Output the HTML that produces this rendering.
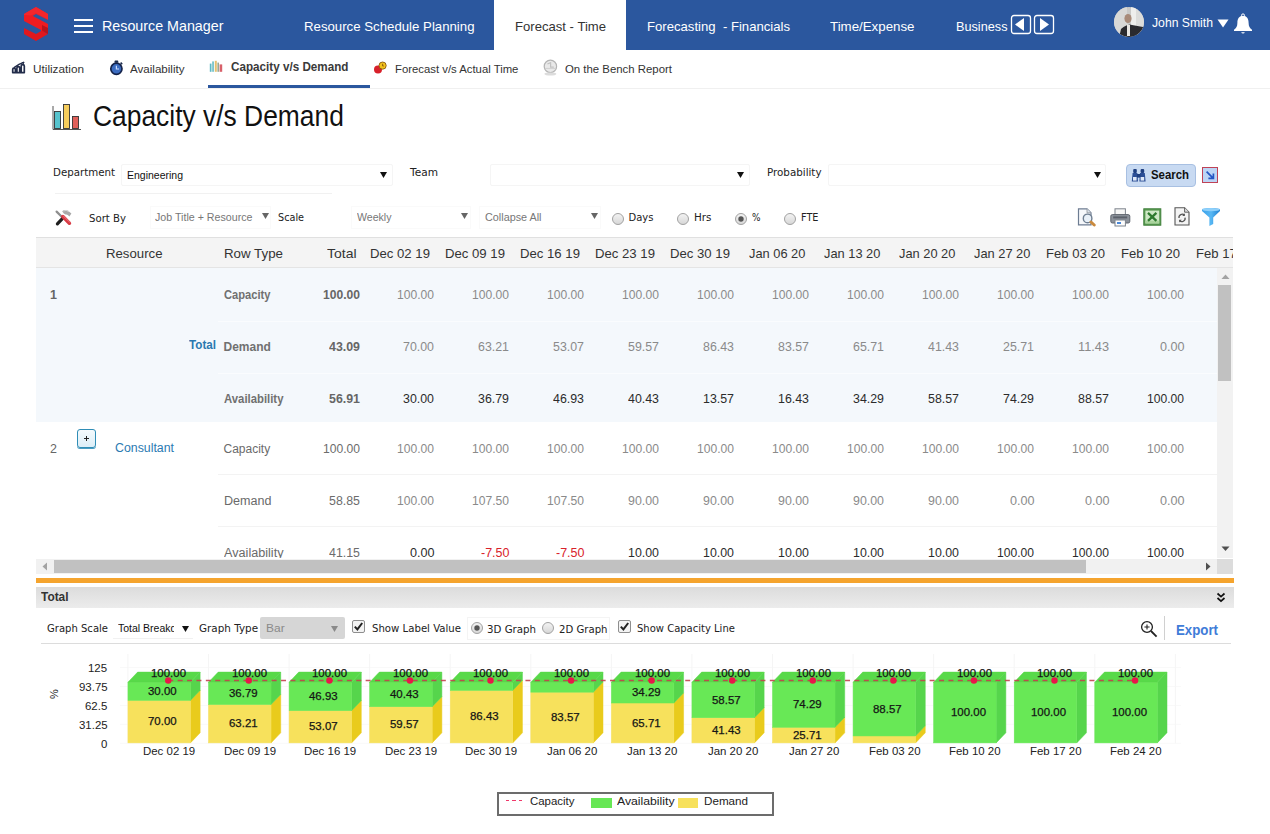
<!DOCTYPE html>
<html lang="en"><head><meta charset="utf-8"><title>Capacity v/s Demand</title>
<style>
html,body{margin:0;padding:0;background:#fff;}
header,nav,main,section{display:block;position:static;margin:0;padding:0;}
body{width:1270px;height:834px;position:relative;overflow:hidden;font-family:"Liberation Sans",Arial,sans-serif;}
.b{position:absolute;box-sizing:border-box;display:block;}
.t{position:absolute;white-space:nowrap;display:block;transform-origin:0 50%;}
</style></head>
<body>
<header>
<div class="b" style="left:0px;top:0px;width:1270px;height:49.5px;background:#2b579e;"></div>
<svg class="b" style="left:23px;top:6px;" width="26" height="36" viewBox="0 0 26 36">
<polygon points="13,1 25,8 25,14 13,8 7,11.5 1,8" fill="#e8222a"/>
<polygon points="1,8 7,11.5 7,17 1,14" fill="#b8141c"/>
<polygon points="1,9 1,15 18,24 18,27.5 25,23.5 25,18 8,9 " fill="#ee1c22"/>
<polygon points="13,35 1,28 1,22 13,28 19,24.5 25,28" fill="#e0181e"/>
<polygon points="25,28 19,24.5 19,19 25,22" fill="#b8141c"/>
<polygon points="13,1 25,8 25,13.5 13,7 8,9.5 1,9 1,8" fill="#f4262c"/>
</svg>
<div class="b" style="left:74px;top:19px;width:19px;height:2px;background:#fff;"></div>
<div class="b" style="left:74px;top:25px;width:19px;height:2px;background:#fff;"></div>
<div class="b" style="left:74px;top:31px;width:19px;height:2px;background:#fff;"></div>
<span class="t" style="left:101.5px;top:17.8px;font-size:15px;line-height:16.75px;color:#fff;transform:scaleX(0.952);">Resource Manager</span>
<span class="t" style="left:303.5px;top:20.1px;font-size:13px;line-height:14.52px;color:#fff;transform:scaleX(1.017);">Resource Schedule Planning</span>
<div class="b" style="left:494px;top:0px;width:132px;height:50px;background:#fff;"></div>
<span class="t" style="left:514.5px;top:20.1px;font-size:13px;line-height:14.52px;color:#333;transform:scaleX(1.008);">Forecast - Time</span>
<span class="t" style="left:646.5px;top:20.1px;font-size:13px;line-height:14.52px;color:#fff;transform:scaleX(1.010);white-space:pre;">Forecasting  - Financials</span>
<span class="t" style="left:830.0px;top:20.1px;font-size:13px;line-height:14.52px;color:#fff;transform:scaleX(1.023);">Time/Expense</span>
<span class="t" style="left:955.5px;top:20.1px;font-size:13px;line-height:14.52px;color:#fff;transform:scaleX(0.976);">Business</span>
<svg class="b" style="left:1010px;top:14px;" width="46" height="21" viewBox="0 0 46 21">
<rect x="1.5" y="1.5" width="19" height="18" rx="2.5" fill="none" stroke="#fff" stroke-width="1.3"/>
<polygon points="5,10.5 14,4 14,17" fill="#fff"/>
<rect x="24.5" y="1.5" width="19" height="18" rx="2.5" fill="none" stroke="#fff" stroke-width="1.3"/>
<polygon points="39,10.5 30,4 30,17" fill="#fff"/>
</svg>
<svg class="b" style="left:1113px;top:6px;" width="32" height="32" viewBox="0 0 32 32">
<defs><clipPath id="av"><circle cx="16" cy="16" r="15"/></clipPath></defs>
<g clip-path="url(#av)">
<rect width="32" height="32" fill="#c9c9c7"/>
<rect x="0" y="0" width="14" height="32" fill="#d8d8d6"/>
<rect x="18" y="0" width="5" height="20" fill="#eeeeec"/>
<rect x="23" y="0" width="9" height="32" fill="#dcdcda"/>
<ellipse cx="15" cy="12.5" rx="3.6" ry="4.6" fill="#a88a78"/>
<path d="M6 32 L8 23 Q15 17 19 19 L30 21 L31 32 Z" fill="#2a2a2e"/>
<path d="M14 18 L17 19 L17 30 L14 30 Z" fill="#e8e6e2"/>
</g></svg>
<span class="t" style="left:1152.0px;top:16.0px;font-size:13px;line-height:14.52px;color:#fff;transform:scaleX(0.938);">John Smith</span>
<svg class="b" style="left:1217px;top:19px;" width="12" height="9" viewBox="0 0 12 9"><polygon points="0.5,0.5 11.5,0.5 6,8.5" fill="#fff"/></svg>
<svg class="b" style="left:1233px;top:12.5px;" width="20" height="22" viewBox="0 0 20 22">
<circle cx="10" cy="2.4" r="1.5" fill="none" stroke="#fff" stroke-width="1"/>
<path d="M10 2.8 C13.8 2.8 15.6 6 15.6 9.8 C15.6 13.4 16.8 15.2 19 16.8 L19 18 L1 18 L1 16.8 C3.2 15.2 4.4 13.4 4.4 9.8 C4.4 6 6.2 2.8 10 2.8 Z" fill="#fff"/>
<path d="M8.2 19.2 a1.9 1.9 0 0 0 3.6 0 Z" fill="#fff"/>
</svg>
</header>
<nav>
<div class="b" style="left:0px;top:88px;width:1270px;height:1px;background:#f0f0f0;"></div>
<div class="b" style="left:208px;top:85px;width:162px;height:3px;background:#2b579e;"></div>
<svg class="b" style="left:10.5px;top:61px;" width="15.5" height="13" viewBox="0 0 15.5 13">
<path d="M1.7 11.6 L1.7 8.6 Q1.7 7.2 3 7.2 Q4.4 7.2 4.4 8.6 L4.4 11 L5.9 11 L5.9 7 Q5.9 5.6 7.3 5.6 Q8.7 5.6 8.7 7 L8.7 11 L10.2 11 L10.2 5 Q10.2 3.6 11.7 3.6 Q13.3 3.6 13.3 5 L13.3 11.6 Z" fill="#fff" stroke="#222c4a" stroke-width="1.7" stroke-linejoin="round"/>
<path d="M3.4 6.4 L8 3.4 L12.6 1.4" fill="none" stroke="#222c4a" stroke-width="1.5" stroke-linecap="round"/>
<path d="M10.6 0.9 L13.4 1 L12.6 3.4 Z" fill="#222c4a"/>
</svg>
<span class="t" style="left:32.5px;top:63.0px;font-size:11px;line-height:12.29px;color:#333;transform:scaleX(1.070);">Utilization</span>
<svg class="b" style="left:109px;top:60px;" width="15" height="16" viewBox="0 0 15 16">
<rect x="5.6" y="0.6" width="3.6" height="2.2" rx="0.6" fill="#1b2a4a"/>
<path d="M11.6 2.6 l1.6 1.6" stroke="#1b2a4a" stroke-width="1.6"/>
<circle cx="7.4" cy="8.8" r="5.6" fill="#3b6cc0" stroke="#14234a" stroke-width="1.7"/>
<path d="M7.4 5.8 L7.4 9 L10 9" fill="none" stroke="#c9dcff" stroke-width="1.2"/>
</svg>
<span class="t" style="left:130.0px;top:63.0px;font-size:11px;line-height:12.29px;color:#333;transform:scaleX(1.053);">Availability</span>
<svg class="b" style="left:208.5px;top:60px;" width="15" height="13" viewBox="0 0 15 13">
<rect x="0.8" y="3.6" width="1.7" height="8.2" fill="#5fb9c4"/>
<rect x="3.2" y="1.4" width="1.7" height="10.4" fill="#6fc0c8"/>
<rect x="5.8" y="0.8" width="2" height="11" fill="#e5c070"/>
<rect x="8.4" y="2.6" width="1.6" height="9.2" fill="#9aa890"/>
<rect x="10.6" y="4.4" width="2.6" height="7.4" fill="#d8606a"/>
</svg>
<span class="t" style="left:230.5px;top:61.1px;font-size:12.5px;line-height:13.96px;color:#3a3a3a;font-weight:700;transform:scaleX(0.934);">Capacity v/s Demand</span>
<svg class="b" style="left:373px;top:61px;" width="15" height="13" viewBox="0 0 15 13">
<circle cx="5" cy="8.4" r="4" fill="#d8202a"/>
<circle cx="9.6" cy="4.6" r="3.6" fill="#f2c21c" stroke="#8a5a10" stroke-width="0.9"/>
<path d="M9.6 2.8 L9.6 5 L10.8 5" stroke="#7a4a10" stroke-width="0.8" fill="none"/>
</svg>
<span class="t" style="left:394.5px;top:63.0px;font-size:11px;line-height:12.29px;color:#333;transform:scaleX(1.030);">Forecast v/s Actual Time</span>
<svg class="b" style="left:542px;top:59px;" width="17" height="18" viewBox="0 0 17 18">
<circle cx="8.4" cy="7.4" r="6.2" fill="#e9e9e9" stroke="#b4b4b4" stroke-width="1.2"/>
<path d="M5.4 5 L8.6 3.6 L8.6 8.2 L11.8 8.2" fill="none" stroke="#c2c2c2" stroke-width="1.2"/>
<path d="M2.8 9.4 L14 9.4" stroke="#cfcfcf" stroke-width="1"/>
<ellipse cx="8.4" cy="15" rx="6" ry="1.6" fill="#dcdcdc"/>
</svg>
<span class="t" style="left:564.5px;top:63.0px;font-size:11px;line-height:12.29px;color:#333;transform:scaleX(1.035);">On the Bench Report</span>
</nav>
<main>
<section>
<svg class="b" style="left:52px;top:103px;" width="31" height="28" viewBox="0 0 31 28">
<rect x="2.5" y="8.5" width="6" height="17" fill="#56c3cd" stroke="#333" stroke-width="0.9"/>
<rect x="11.5" y="1.5" width="6" height="24" fill="#f6cd5c" stroke="#333" stroke-width="0.9"/>
<rect x="20.5" y="13.5" width="6" height="12" fill="#e0605a" stroke="#333" stroke-width="0.9"/>
<path d="M1 3 L1 26.5 L29 26.5" fill="none" stroke="#555" stroke-width="1"/>
</svg>
<span class="t" style="left:93.0px;top:101.2px;font-size:28.6px;line-height:31.95px;color:#111;transform:scaleX(0.923);">Capacity v/s Demand</span>
</section>
<section>
<span class="t" style="left:52.5px;top:166.7px;font-size:10px;line-height:11.64px;color:#222;font-family:'DejaVu Sans','Liberation Sans',sans-serif;transform:scaleX(1.025);">Department</span>
<div class="b" style="left:121px;top:164px;width:272px;height:22px;background:#fff;border:1px solid #f5f5f5;border-radius:2px;"></div>
<span class="t" style="left:126.5px;top:168.9px;font-size:11.5px;line-height:12.85px;color:#111;transform:scaleX(0.912);">Engineering</span>
<svg class="b" style="left:380.0px;top:172.3px;" width="7" height="6" viewBox="0 0 7 6"><polygon points="0,0 7,0 3.5,6" fill="#111"/></svg>
<div class="b" style="left:55px;top:193px;width:277px;height:1px;background:#f1f1f1;"></div>
<span class="t" style="left:409.6px;top:166.7px;font-size:10px;line-height:11.64px;color:#222;font-family:'DejaVu Sans','Liberation Sans',sans-serif;transform:scaleX(1.057);">Team</span>
<div class="b" style="left:490px;top:164px;width:260px;height:22px;background:#fff;border:1px solid #f5f5f5;border-radius:2px;"></div>
<svg class="b" style="left:737.0px;top:172.3px;" width="7" height="6" viewBox="0 0 7 6"><polygon points="0,0 7,0 3.5,6" fill="#111"/></svg>
<span class="t" style="left:766.5px;top:166.7px;font-size:10px;line-height:11.64px;color:#222;font-family:'DejaVu Sans','Liberation Sans',sans-serif;transform:scaleX(1.031);">Probability</span>
<div class="b" style="left:828px;top:164px;width:278px;height:22px;background:#fff;border:1px solid #f5f5f5;border-radius:2px;"></div>
<svg class="b" style="left:1094.0px;top:172.3px;" width="7" height="6" viewBox="0 0 7 6"><polygon points="0,0 7,0 3.5,6" fill="#111"/></svg>
<div class="b" style="left:1126px;top:164px;width:70px;height:23px;background:#c8daf2;border:1px solid #a8c0e2;border-radius:4px;"></div>
<svg class="b" style="left:1131px;top:168px;" width="16" height="15" viewBox="0 0 16 15">
<rect x="2.2" y="1" width="3.6" height="4" rx="1" fill="#1f3f80"/>
<rect x="9.6" y="1" width="3.6" height="4" rx="1" fill="#1f3f80"/>
<path d="M1.6 5 L6.4 5 L7 13.6 L0.8 13.6 Z" fill="#2c4f96"/>
<path d="M9 5 L13.8 5 L14.6 13.6 L8.4 13.6 Z" fill="#2c4f96"/>
<rect x="6" y="6" width="3.4" height="3.6" fill="#1f3f80"/>
<rect x="2" y="9" width="3.6" height="3.6" fill="#dfe9f8"/>
<rect x="9.6" y="9" width="3.6" height="3.6" fill="#dfe9f8"/>
</svg>
<span class="t" style="left:1150.5px;top:169.1px;font-size:12px;line-height:13.40px;color:#111;font-weight:700;transform:scaleX(0.950);">Search</span>
<div class="b" style="left:1202px;top:167px;width:16px;height:16px;background:#bcd5f5;border:1.5px solid #bf4256;"></div>
<svg class="b" style="left:1204px;top:169px;" width="12" height="12" viewBox="0 0 12 12"><path d="M2.6 2.6 L8.8 8.8 M9.4 4.4 L9.4 9.4 L4.4 9.4" fill="none" stroke="#2456c4" stroke-width="1.7"/></svg>
</section>
<section>
<svg class="b" style="left:54px;top:208px;" width="19" height="19" viewBox="0 0 19 19">
<path d="M8.2 3.2 Q12 0.2 17.4 5.4 L15.4 8.4 Q13.4 6 11.6 6.6 L9.8 5.6 Z" fill="#a9a9a9"/>
<path d="M9.4 3 Q12 1.4 15 3.6" fill="none" stroke="#d5d5d5" stroke-width="1"/>
<path d="M2.6 3.6 L8 9" stroke="#8e8e8e" stroke-width="2.2" stroke-linecap="round"/>
<path d="M3.4 15.8 L8.6 10.4" stroke="#1e1e1e" stroke-width="3.2" stroke-linecap="round"/>
<path d="M8.8 8.6 L15.4 15.2" stroke="#d83a44" stroke-width="3.6" stroke-linecap="round"/>
<path d="M9.4 8 L15.8 14.4" stroke="#ee7a80" stroke-width="0.9" stroke-linecap="round"/>
</svg>
<span class="t" style="left:88.5px;top:212.5px;font-size:10px;line-height:11.64px;color:#222;font-family:'DejaVu Sans','Liberation Sans',sans-serif;transform:scaleX(1.015);">Sort By</span>
<div class="b" style="left:150px;top:206px;width:121px;height:23px;background:#fff;border:1px solid #fafafa;"></div>
<span class="t" style="left:155.0px;top:211.2px;font-size:11px;line-height:12.29px;color:#777;transform:scaleX(0.969);">Job Title + Resource</span>
<svg class="b" style="left:261.5px;top:212.5px;" width="7" height="6" viewBox="0 0 7 6"><polygon points="0,0 7,0 3.5,6" fill="#666"/></svg>
<span class="t" style="left:278.0px;top:212.2px;font-size:10px;line-height:11.64px;color:#222;font-family:'DejaVu Sans','Liberation Sans',sans-serif;transform:scaleX(0.967);">Scale</span>
<div class="b" style="left:351px;top:206px;width:120px;height:23px;background:#fff;border:1px solid #fafafa;"></div>
<span class="t" style="left:357.0px;top:211.2px;font-size:11px;line-height:12.29px;color:#777;transform:scaleX(0.962);">Weekly</span>
<svg class="b" style="left:460.5px;top:212.5px;" width="7" height="6" viewBox="0 0 7 6"><polygon points="0,0 7,0 3.5,6" fill="#666"/></svg>
<div class="b" style="left:479px;top:206px;width:122px;height:23px;background:#fff;border:1px solid #fafafa;"></div>
<span class="t" style="left:485.0px;top:211.2px;font-size:11px;line-height:12.29px;color:#777;transform:scaleX(0.983);">Collapse All</span>
<svg class="b" style="left:590.5px;top:212.5px;" width="7" height="6" viewBox="0 0 7 6"><polygon points="0,0 7,0 3.5,6" fill="#666"/></svg>
<svg class="b" style="left:610px;top:210.8px;" width="16" height="16" viewBox="0 0 16 16"><defs><linearGradient id="rg618218" x1="0" y1="0" x2="0" y2="1"><stop offset="0" stop-color="#f4f4f4"/><stop offset="1" stop-color="#d6d6d6"/></linearGradient></defs>
<circle cx="8" cy="8" r="5.5" fill="url(#rg618218)" stroke="#a2a2a2" stroke-width="1"/></svg>
<span class="t" style="left:628.5px;top:212.2px;font-size:10px;line-height:11.64px;color:#222;font-family:'DejaVu Sans','Liberation Sans',sans-serif;">Days</span>
<svg class="b" style="left:675px;top:210.8px;" width="16" height="16" viewBox="0 0 16 16"><defs><linearGradient id="rg683218" x1="0" y1="0" x2="0" y2="1"><stop offset="0" stop-color="#f4f4f4"/><stop offset="1" stop-color="#d6d6d6"/></linearGradient></defs>
<circle cx="8" cy="8" r="5.5" fill="url(#rg683218)" stroke="#a2a2a2" stroke-width="1"/></svg>
<span class="t" style="left:693.5px;top:212.2px;font-size:10px;line-height:11.64px;color:#222;font-family:'DejaVu Sans','Liberation Sans',sans-serif;transform:scaleX(1.039);">Hrs</span>
<svg class="b" style="left:733px;top:210.8px;" width="16" height="16" viewBox="0 0 16 16"><defs><linearGradient id="rg741218" x1="0" y1="0" x2="0" y2="1"><stop offset="0" stop-color="#f4f4f4"/><stop offset="1" stop-color="#d6d6d6"/></linearGradient></defs>
<circle cx="8" cy="8" r="5.5" fill="url(#rg741218)" stroke="#a2a2a2" stroke-width="1"/><circle cx="8" cy="8" r="2.7" fill="#555"/></svg>
<span class="t" style="left:751.5px;top:212.2px;font-size:10px;line-height:11.64px;color:#222;font-family:'DejaVu Sans','Liberation Sans',sans-serif;transform:scaleX(0.895);">%</span>
<svg class="b" style="left:782px;top:210.8px;" width="16" height="16" viewBox="0 0 16 16"><defs><linearGradient id="rg790218" x1="0" y1="0" x2="0" y2="1"><stop offset="0" stop-color="#f4f4f4"/><stop offset="1" stop-color="#d6d6d6"/></linearGradient></defs>
<circle cx="8" cy="8" r="5.5" fill="url(#rg790218)" stroke="#a2a2a2" stroke-width="1"/></svg>
<span class="t" style="left:800.5px;top:212.2px;font-size:10px;line-height:11.64px;color:#222;font-family:'DejaVu Sans','Liberation Sans',sans-serif;transform:scaleX(0.972);">FTE</span>
<svg class="b" style="left:1077px;top:208px;" width="20" height="19" viewBox="0 0 20 19">
<path d="M1.5 0.8 L10 0.8 L14 4.8 L14 16.8 L1.5 16.8 Z" fill="#f6f8fb" stroke="#6d7c92" stroke-width="1.2"/>
<path d="M10 0.8 L10 4.8 L14 4.8" fill="#dde3ea" stroke="#8a8f98" stroke-width="0.8"/>
<circle cx="10.6" cy="10.4" r="4.3" fill="#e8f0f8" stroke="#6f7f92" stroke-width="1.4"/>
<path d="M14 14 L17.2 17" stroke="#c98a3e" stroke-width="3" stroke-linecap="round"/>
</svg>
<svg class="b" style="left:1110px;top:208px;" width="21" height="19" viewBox="0 0 21 19">
<rect x="5" y="0.8" width="10.4" height="7" fill="#f6f6f6" stroke="#7d838c" stroke-width="1"/>
<rect x="0.8" y="6.6" width="19" height="8.4" rx="1.6" fill="#8c929b" stroke="#5f656e" stroke-width="1"/>
<rect x="3.2" y="8.4" width="14" height="2" fill="#5a606a"/>
<rect x="5" y="12" width="10.4" height="6" fill="#fdfdfd" stroke="#7d838c" stroke-width="1"/>
<rect x="7" y="14" width="4" height="2" fill="#4a88d8"/>
</svg>
<svg class="b" style="left:1143px;top:208px;" width="19" height="18" viewBox="0 0 19 18">
<rect x="0.8" y="0.8" width="17" height="16.4" fill="#5a9a52" stroke="#3f7f3a" stroke-width="1"/>
<rect x="2.4" y="2.6" width="13.8" height="12.8" fill="#cfe8c6"/>
<rect x="2.4" y="12.6" width="13.8" height="2.8" fill="#a9d49c"/>
<path d="M5 4.8 L13.4 12.8 M13.4 4.8 L5 12.8" stroke="#2f7a2f" stroke-width="2.3"/>
</svg>
<svg class="b" style="left:1174px;top:207px;" width="17" height="19" viewBox="0 0 17 19">
<path d="M1 0.8 L10.6 0.8 L15 5.2 L15 18 L1 18 Z" fill="#f4f4f4" stroke="#555" stroke-width="1.1"/>
<path d="M10.6 0.8 L10.6 5.2 L15 5.2" fill="#ddd" stroke="#555" stroke-width="0.9"/>
<path d="M5 11 A3.2 3.2 0 0 1 10.6 8.4 M11 10.6 A3.2 3.2 0 0 1 5.4 13.4" fill="none" stroke="#555" stroke-width="1.3"/>
<path d="M10.8 6.2 L10.8 9 L8.2 9 Z M5.2 15.6 L5.2 12.8 L7.8 12.8 Z" fill="#555"/>
</svg>
<svg class="b" style="left:1201px;top:207px;" width="20" height="20" viewBox="0 0 20 20">
<defs><linearGradient id="fg" x1="0" y1="0" x2="1" y2="0"><stop offset="0" stop-color="#3aa0e8"/><stop offset="0.5" stop-color="#58b8f4"/><stop offset="1" stop-color="#1f7fd0"/></linearGradient></defs>
<path d="M1 2 Q10 0 19 2 L19 4 L12.2 10.4 L12.2 17 L8.4 19 L8.4 10.4 L1 4 Z" fill="url(#fg)"/>
<ellipse cx="10" cy="2.6" rx="9" ry="1.7" fill="#8fd0fa"/>
</svg>
</section>
<section>
<div class="b" style="left:36px;top:237px;width:1196.5px;height:31px;background:#f4f4f4;border-top:1px solid #e0e0e0;border-bottom:1px solid #e4e4e4;"></div>
<span class="t" style="left:105.5px;top:246.8px;font-size:13px;line-height:14.52px;color:#333;transform:scaleX(1.015);">Resource</span>
<span class="t" style="left:223.5px;top:246.8px;font-size:13px;line-height:14.52px;color:#333;transform:scaleX(1.024);">Row Type</span>
<span class="t" style="left:327.0px;top:246.8px;font-size:13px;line-height:14.52px;color:#333;transform:scaleX(1.075);">Total</span>
<div class="b" style="left:36px;top:238px;width:1196.5px;height:29px;overflow:hidden;">
<span class="t" style="left:334.4px;top:8.8px;font-size:13px;line-height:14.52px;color:#333;transform:scaleX(1.012);">Dec 02 19</span>
<span class="t" style="left:409.4px;top:8.8px;font-size:13px;line-height:14.52px;color:#333;transform:scaleX(1.012);">Dec 09 19</span>
<span class="t" style="left:484.4px;top:8.8px;font-size:13px;line-height:14.52px;color:#333;transform:scaleX(1.012);">Dec 16 19</span>
<span class="t" style="left:559.4px;top:8.8px;font-size:13px;line-height:14.52px;color:#333;transform:scaleX(1.012);">Dec 23 19</span>
<span class="t" style="left:634.4px;top:8.8px;font-size:13px;line-height:14.52px;color:#333;transform:scaleX(1.012);">Dec 30 19</span>
<span class="t" style="left:713.0px;top:8.8px;font-size:13px;line-height:14.52px;color:#333;transform:scaleX(0.987);">Jan 06 20</span>
<span class="t" style="left:788.0px;top:8.8px;font-size:13px;line-height:14.52px;color:#333;transform:scaleX(0.987);">Jan 13 20</span>
<span class="t" style="left:863.0px;top:8.8px;font-size:13px;line-height:14.52px;color:#333;transform:scaleX(0.987);">Jan 20 20</span>
<span class="t" style="left:938.0px;top:8.8px;font-size:13px;line-height:14.52px;color:#333;transform:scaleX(0.987);">Jan 27 20</span>
<span class="t" style="left:1010.4px;top:8.8px;font-size:13px;line-height:14.52px;color:#333;transform:scaleX(1.007);">Feb 03 20</span>
<span class="t" style="left:1085.4px;top:8.8px;font-size:13px;line-height:14.52px;color:#333;transform:scaleX(1.007);">Feb 10 20</span>
<span class="t" style="left:1160.4px;top:8.8px;font-size:13px;line-height:14.52px;color:#333;transform:scaleX(1.007);">Feb 17 20</span>
</div>
<div class="b" style="left:36px;top:268px;width:1181px;height:290px;overflow:hidden;">
<div class="b" style="left:0px;top:0px;width:1181px;height:153.5px;background:#f4f8fc;"></div>
<span class="t" style="left:187.5px;top:20.9px;font-size:12px;line-height:13.40px;color:#707070;font-weight:700;transform:scaleX(0.929);">Capacity</span>
<span class="t" style="left:287.2px;top:20.9px;font-size:12px;line-height:13.40px;color:#666;font-weight:700;transform:scaleX(1.008);">100.00</span>
<span class="t" style="left:361.0px;top:20.9px;font-size:12px;line-height:13.40px;color:#8a8a8a;transform:scaleX(1.008);">100.00</span>
<span class="t" style="left:436.0px;top:20.9px;font-size:12px;line-height:13.40px;color:#8a8a8a;transform:scaleX(1.008);">100.00</span>
<span class="t" style="left:511.0px;top:20.9px;font-size:12px;line-height:13.40px;color:#8a8a8a;transform:scaleX(1.008);">100.00</span>
<span class="t" style="left:586.0px;top:20.9px;font-size:12px;line-height:13.40px;color:#8a8a8a;transform:scaleX(1.008);">100.00</span>
<span class="t" style="left:661.0px;top:20.9px;font-size:12px;line-height:13.40px;color:#8a8a8a;transform:scaleX(1.008);">100.00</span>
<span class="t" style="left:736.0px;top:20.9px;font-size:12px;line-height:13.40px;color:#8a8a8a;transform:scaleX(1.008);">100.00</span>
<span class="t" style="left:811.0px;top:20.9px;font-size:12px;line-height:13.40px;color:#8a8a8a;transform:scaleX(1.008);">100.00</span>
<span class="t" style="left:886.0px;top:20.9px;font-size:12px;line-height:13.40px;color:#8a8a8a;transform:scaleX(1.008);">100.00</span>
<span class="t" style="left:961.0px;top:20.9px;font-size:12px;line-height:13.40px;color:#8a8a8a;transform:scaleX(1.008);">100.00</span>
<span class="t" style="left:1036.0px;top:20.9px;font-size:12px;line-height:13.40px;color:#8a8a8a;transform:scaleX(1.008);">100.00</span>
<span class="t" style="left:1111.0px;top:20.9px;font-size:12px;line-height:13.40px;color:#8a8a8a;transform:scaleX(1.008);">100.00</span>
<span class="t" style="left:187.5px;top:72.9px;font-size:12px;line-height:13.40px;color:#707070;font-weight:700;">Demand</span>
<span class="t" style="left:293.2px;top:72.9px;font-size:12px;line-height:13.40px;color:#666;font-weight:700;transform:scaleX(1.031);">43.09</span>
<span class="t" style="left:367.0px;top:72.9px;font-size:12px;line-height:13.40px;color:#8a8a8a;transform:scaleX(1.031);">70.00</span>
<span class="t" style="left:442.0px;top:72.9px;font-size:12px;line-height:13.40px;color:#8a8a8a;transform:scaleX(1.031);">63.21</span>
<span class="t" style="left:517.0px;top:72.9px;font-size:12px;line-height:13.40px;color:#8a8a8a;transform:scaleX(1.031);">53.07</span>
<span class="t" style="left:592.0px;top:72.9px;font-size:12px;line-height:13.40px;color:#8a8a8a;transform:scaleX(1.031);">59.57</span>
<span class="t" style="left:667.0px;top:72.9px;font-size:12px;line-height:13.40px;color:#8a8a8a;transform:scaleX(1.031);">86.43</span>
<span class="t" style="left:742.0px;top:72.9px;font-size:12px;line-height:13.40px;color:#8a8a8a;transform:scaleX(1.031);">83.57</span>
<span class="t" style="left:817.0px;top:72.9px;font-size:12px;line-height:13.40px;color:#8a8a8a;transform:scaleX(1.031);">65.71</span>
<span class="t" style="left:892.0px;top:72.9px;font-size:12px;line-height:13.40px;color:#8a8a8a;transform:scaleX(1.031);">41.43</span>
<span class="t" style="left:967.0px;top:72.9px;font-size:12px;line-height:13.40px;color:#8a8a8a;transform:scaleX(1.031);">25.71</span>
<span class="t" style="left:1042.0px;top:72.9px;font-size:12px;line-height:13.40px;color:#8a8a8a;transform:scaleX(1.063);">11.43</span>
<span class="t" style="left:1123.5px;top:72.9px;font-size:12px;line-height:13.40px;color:#8a8a8a;transform:scaleX(1.050);">0.00</span>
<span class="t" style="left:187.5px;top:124.9px;font-size:12px;line-height:13.40px;color:#707070;font-weight:700;transform:scaleX(0.945);">Availability</span>
<span class="t" style="left:293.2px;top:124.9px;font-size:12px;line-height:13.40px;color:#666;font-weight:700;transform:scaleX(1.031);">56.91</span>
<span class="t" style="left:367.0px;top:124.9px;font-size:12px;line-height:13.40px;color:#2b2b2b;transform:scaleX(1.031);">30.00</span>
<span class="t" style="left:442.0px;top:124.9px;font-size:12px;line-height:13.40px;color:#2b2b2b;transform:scaleX(1.031);">36.79</span>
<span class="t" style="left:517.0px;top:124.9px;font-size:12px;line-height:13.40px;color:#2b2b2b;transform:scaleX(1.031);">46.93</span>
<span class="t" style="left:592.0px;top:124.9px;font-size:12px;line-height:13.40px;color:#2b2b2b;transform:scaleX(1.031);">40.43</span>
<span class="t" style="left:667.0px;top:124.9px;font-size:12px;line-height:13.40px;color:#2b2b2b;transform:scaleX(1.031);">13.57</span>
<span class="t" style="left:742.0px;top:124.9px;font-size:12px;line-height:13.40px;color:#2b2b2b;transform:scaleX(1.031);">16.43</span>
<span class="t" style="left:817.0px;top:124.9px;font-size:12px;line-height:13.40px;color:#2b2b2b;transform:scaleX(1.031);">34.29</span>
<span class="t" style="left:892.0px;top:124.9px;font-size:12px;line-height:13.40px;color:#2b2b2b;transform:scaleX(1.031);">58.57</span>
<span class="t" style="left:967.0px;top:124.9px;font-size:12px;line-height:13.40px;color:#2b2b2b;transform:scaleX(1.031);">74.29</span>
<span class="t" style="left:1042.0px;top:124.9px;font-size:12px;line-height:13.40px;color:#2b2b2b;transform:scaleX(1.031);">88.57</span>
<span class="t" style="left:1111.0px;top:124.9px;font-size:12px;line-height:13.40px;color:#2b2b2b;transform:scaleX(1.008);">100.00</span>
<span class="t" style="left:187.5px;top:174.9px;font-size:12px;line-height:13.40px;color:#6a6a6a;">Capacity</span>
<span class="t" style="left:287.2px;top:174.9px;font-size:12px;line-height:13.40px;color:#6c6c6c;transform:scaleX(1.008);">100.00</span>
<span class="t" style="left:361.0px;top:174.9px;font-size:12px;line-height:13.40px;color:#8a8a8a;transform:scaleX(1.008);">100.00</span>
<span class="t" style="left:436.0px;top:174.9px;font-size:12px;line-height:13.40px;color:#8a8a8a;transform:scaleX(1.008);">100.00</span>
<span class="t" style="left:511.0px;top:174.9px;font-size:12px;line-height:13.40px;color:#8a8a8a;transform:scaleX(1.008);">100.00</span>
<span class="t" style="left:586.0px;top:174.9px;font-size:12px;line-height:13.40px;color:#8a8a8a;transform:scaleX(1.008);">100.00</span>
<span class="t" style="left:661.0px;top:174.9px;font-size:12px;line-height:13.40px;color:#8a8a8a;transform:scaleX(1.008);">100.00</span>
<span class="t" style="left:736.0px;top:174.9px;font-size:12px;line-height:13.40px;color:#8a8a8a;transform:scaleX(1.008);">100.00</span>
<span class="t" style="left:811.0px;top:174.9px;font-size:12px;line-height:13.40px;color:#8a8a8a;transform:scaleX(1.008);">100.00</span>
<span class="t" style="left:886.0px;top:174.9px;font-size:12px;line-height:13.40px;color:#8a8a8a;transform:scaleX(1.008);">100.00</span>
<span class="t" style="left:961.0px;top:174.9px;font-size:12px;line-height:13.40px;color:#8a8a8a;transform:scaleX(1.008);">100.00</span>
<span class="t" style="left:1036.0px;top:174.9px;font-size:12px;line-height:13.40px;color:#8a8a8a;transform:scaleX(1.008);">100.00</span>
<span class="t" style="left:1111.0px;top:174.9px;font-size:12px;line-height:13.40px;color:#8a8a8a;transform:scaleX(1.008);">100.00</span>
<span class="t" style="left:187.5px;top:226.9px;font-size:12px;line-height:13.40px;color:#6a6a6a;transform:scaleX(1.047);">Demand</span>
<span class="t" style="left:293.2px;top:226.9px;font-size:12px;line-height:13.40px;color:#6c6c6c;transform:scaleX(1.031);">58.85</span>
<span class="t" style="left:361.0px;top:226.9px;font-size:12px;line-height:13.40px;color:#8a8a8a;transform:scaleX(1.008);">100.00</span>
<span class="t" style="left:436.0px;top:226.9px;font-size:12px;line-height:13.40px;color:#8a8a8a;transform:scaleX(1.008);">107.50</span>
<span class="t" style="left:511.0px;top:226.9px;font-size:12px;line-height:13.40px;color:#8a8a8a;transform:scaleX(1.008);">107.50</span>
<span class="t" style="left:592.0px;top:226.9px;font-size:12px;line-height:13.40px;color:#8a8a8a;transform:scaleX(1.031);">90.00</span>
<span class="t" style="left:667.0px;top:226.9px;font-size:12px;line-height:13.40px;color:#8a8a8a;transform:scaleX(1.031);">90.00</span>
<span class="t" style="left:742.0px;top:226.9px;font-size:12px;line-height:13.40px;color:#8a8a8a;transform:scaleX(1.031);">90.00</span>
<span class="t" style="left:817.0px;top:226.9px;font-size:12px;line-height:13.40px;color:#8a8a8a;transform:scaleX(1.031);">90.00</span>
<span class="t" style="left:892.0px;top:226.9px;font-size:12px;line-height:13.40px;color:#8a8a8a;transform:scaleX(1.031);">90.00</span>
<span class="t" style="left:973.5px;top:226.9px;font-size:12px;line-height:13.40px;color:#8a8a8a;transform:scaleX(1.050);">0.00</span>
<span class="t" style="left:1048.5px;top:226.9px;font-size:12px;line-height:13.40px;color:#8a8a8a;transform:scaleX(1.050);">0.00</span>
<span class="t" style="left:1123.5px;top:226.9px;font-size:12px;line-height:13.40px;color:#8a8a8a;transform:scaleX(1.050);">0.00</span>
<span class="t" style="left:187.5px;top:278.9px;font-size:12px;line-height:13.40px;color:#6a6a6a;transform:scaleX(1.054);">Availability</span>
<span class="t" style="left:293.2px;top:278.9px;font-size:12px;line-height:13.40px;color:#6c6c6c;transform:scaleX(1.031);">41.15</span>
<span class="t" style="left:373.5px;top:278.9px;font-size:12px;line-height:13.40px;color:#2b2b2b;transform:scaleX(1.050);">0.00</span>
<span class="t" style="left:444.5px;top:278.9px;font-size:12px;line-height:13.40px;color:#d9222a;transform:scaleX(1.042);">-7.50</span>
<span class="t" style="left:519.5px;top:278.9px;font-size:12px;line-height:13.40px;color:#d9222a;transform:scaleX(1.042);">-7.50</span>
<span class="t" style="left:592.0px;top:278.9px;font-size:12px;line-height:13.40px;color:#2b2b2b;transform:scaleX(1.031);">10.00</span>
<span class="t" style="left:667.0px;top:278.9px;font-size:12px;line-height:13.40px;color:#2b2b2b;transform:scaleX(1.031);">10.00</span>
<span class="t" style="left:742.0px;top:278.9px;font-size:12px;line-height:13.40px;color:#2b2b2b;transform:scaleX(1.031);">10.00</span>
<span class="t" style="left:817.0px;top:278.9px;font-size:12px;line-height:13.40px;color:#2b2b2b;transform:scaleX(1.031);">10.00</span>
<span class="t" style="left:892.0px;top:278.9px;font-size:12px;line-height:13.40px;color:#2b2b2b;transform:scaleX(1.031);">10.00</span>
<span class="t" style="left:961.0px;top:278.9px;font-size:12px;line-height:13.40px;color:#2b2b2b;transform:scaleX(1.008);">100.00</span>
<span class="t" style="left:1036.0px;top:278.9px;font-size:12px;line-height:13.40px;color:#2b2b2b;transform:scaleX(1.008);">100.00</span>
<span class="t" style="left:1111.0px;top:278.9px;font-size:12px;line-height:13.40px;color:#2b2b2b;transform:scaleX(1.008);">100.00</span>
<span class="t" style="left:14.0px;top:20.9px;font-size:12px;line-height:13.40px;color:#666;font-weight:700;transform:scaleX(1.040);">1</span>
<span class="t" style="left:153.0px;top:71.1px;font-size:12px;line-height:13.40px;color:#2a78b0;font-weight:700;transform:scaleX(0.972);">Total</span>
<span class="t" style="left:13.5px;top:174.9px;font-size:12px;line-height:13.40px;color:#666;transform:scaleX(1.040);">2</span>
<span class="t" style="left:78.5px;top:173.9px;font-size:12px;line-height:13.40px;color:#2a7ab2;transform:scaleX(1.029);">Consultant</span>
<div class="b" style="left:41px;top:161px;width:19px;height:19px;background:linear-gradient(#f4fafd,#dceef7);border:1.5px solid #2f8db6;border-radius:3px;box-shadow:0 1px 0 #4a9cc0;"></div>
<div class="b" style="left:48px;top:170px;width:5px;height:1px;background:#222;"></div>
<div class="b" style="left:50px;top:168px;width:1px;height:5px;background:#222;"></div>
<div class="b" style="left:182px;top:52.5px;width:999px;height:1px;background:#fafcfe;"></div>
<div class="b" style="left:182px;top:104.5px;width:999px;height:1px;background:#fafcfe;"></div>
<div class="b" style="left:182px;top:205.5px;width:999px;height:1px;background:#f3f3f3;"></div>
<div class="b" style="left:182px;top:258.0px;width:999px;height:1px;background:#f3f3f3;"></div>
</div>
<div class="b" style="left:1217px;top:268px;width:15.5px;height:290px;background:#f2f2f2;"></div>
<div class="b" style="left:1218px;top:285px;width:13px;height:96px;background:#c1c1c1;"></div>
<svg class="b" style="left:1221px;top:274px;" width="9" height="6" viewBox="0 0 9 6"><polygon points="4.5,0.5 8.5,5 0.5,5" fill="#a3a3a3"/></svg>
<svg class="b" style="left:1221px;top:546px;" width="9" height="6" viewBox="0 0 9 6"><polygon points="0.5,0.5 8.5,0.5 4.5,5" fill="#505050"/></svg>
<div class="b" style="left:36px;top:559px;width:1181px;height:15px;background:#f1f1f1;"></div>
<div class="b" style="left:54px;top:559.5px;width:1032px;height:13.5px;background:#c1c1c1;"></div>
<svg class="b" style="left:42px;top:562px;" width="6" height="9" viewBox="0 0 6 9"><polygon points="0.5,4.5 5,0.5 5,8.5" fill="#a3a3a3"/></svg>
<svg class="b" style="left:1205px;top:562px;" width="6" height="9" viewBox="0 0 6 9"><polygon points="5.5,4.5 1,0.5 1,8.5" fill="#505050"/></svg>
<div class="b" style="left:1217px;top:558.5px;width:15.5px;height:15.5px;background:#dcdcdc;"></div>
<div class="b" style="left:36px;top:578px;width:1198px;height:5px;background:#f5a42e;"></div>
</section>
<section>
<div class="b" style="left:36px;top:587px;width:1198px;height:21px;background:linear-gradient(#dcdcdc,#ececec);"></div>
<span class="t" style="left:41.0px;top:590.2px;font-size:13px;line-height:14.52px;color:#333;font-weight:700;transform:scaleX(0.914);">Total</span>
<svg class="b" style="left:1216px;top:592px;" width="10" height="11" viewBox="0 0 10 11"><path d="M1.5 1.5 L5 4.6 L8.5 1.5 M1.5 6 L5 9.2 L8.5 6" fill="none" stroke="#111" stroke-width="1.7"/></svg>
<span class="t" style="left:46.5px;top:622.8px;font-size:10px;line-height:11.64px;color:#222;font-family:'DejaVu Sans','Liberation Sans',sans-serif;transform:scaleX(1.004);">Graph Scale</span>
<div class="b" style="left:113px;top:617px;width:80px;height:22px;background:#fff;border-bottom:1px solid #f1f1f1;"></div>
<div class="b" style="left:117px;top:617px;width:57px;height:22px;overflow:hidden;">
<span class="t" style="left:1.0px;top:5.0px;font-size:11.3px;line-height:12.62px;color:#111;transform:scaleX(0.930);">Total Breakdown</span>
</div>
<svg class="b" style="left:181.5px;top:625.5px;" width="7" height="6" viewBox="0 0 7 6"><polygon points="0,0 7,0 3.5,6" fill="#111"/></svg>
<span class="t" style="left:198.5px;top:622.8px;font-size:10px;line-height:11.64px;color:#222;font-family:'DejaVu Sans','Liberation Sans',sans-serif;transform:scaleX(1.039);">Graph Type</span>
<div class="b" style="left:260px;top:617px;width:85px;height:22px;background:#d6d6d6;border-radius:2px;"></div>
<span class="t" style="left:266.0px;top:621.6px;font-size:11.5px;line-height:12.85px;color:#8a8a8a;transform:scaleX(1.040);">Bar</span>
<svg class="b" style="left:330.5px;top:625.5px;" width="7" height="6" viewBox="0 0 7 6"><polygon points="0,0 7,0 3.5,6" fill="#8a8a8a"/></svg>
<svg class="b" style="left:352.3px;top:620.3px;" width="13" height="13" viewBox="0 0 13 13"><rect x="0.5" y="0.5" width="12" height="12" rx="1.5" fill="#f3f3f3" stroke="#8e8e8e"/>
<path d="M2.8 6.6 L5.4 9.4 L10.2 3" fill="none" stroke="#222" stroke-width="2"/></svg>
<span class="t" style="left:371.5px;top:622.8px;font-size:10px;line-height:11.64px;color:#222;font-family:'DejaVu Sans','Liberation Sans',sans-serif;transform:scaleX(1.014);">Show Label Value</span>
<div class="b" style="left:467px;top:617px;width:143px;height:23px;background:#fff;border:1px solid #f4f4f4;"></div>
<svg class="b" style="left:469px;top:619.5px;" width="16" height="16" viewBox="0 0 16 16"><defs><linearGradient id="rg477627" x1="0" y1="0" x2="0" y2="1"><stop offset="0" stop-color="#f4f4f4"/><stop offset="1" stop-color="#d6d6d6"/></linearGradient></defs>
<circle cx="8" cy="8" r="5.5" fill="url(#rg477627)" stroke="#a2a2a2" stroke-width="1"/><circle cx="8" cy="8" r="2.7" fill="#555"/></svg>
<span class="t" style="left:487.0px;top:623.8px;font-size:10px;line-height:11.64px;color:#222;font-family:'DejaVu Sans','Liberation Sans',sans-serif;transform:scaleX(1.023);">3D Graph</span>
<svg class="b" style="left:540px;top:619.5px;" width="16" height="16" viewBox="0 0 16 16"><defs><linearGradient id="rg548627" x1="0" y1="0" x2="0" y2="1"><stop offset="0" stop-color="#f4f4f4"/><stop offset="1" stop-color="#d6d6d6"/></linearGradient></defs>
<circle cx="8" cy="8" r="5.5" fill="url(#rg548627)" stroke="#a2a2a2" stroke-width="1"/></svg>
<span class="t" style="left:558.5px;top:623.8px;font-size:10px;line-height:11.64px;color:#222;font-family:'DejaVu Sans','Liberation Sans',sans-serif;transform:scaleX(1.013);">2D Graph</span>
<svg class="b" style="left:618.3px;top:620.3px;" width="13" height="13" viewBox="0 0 13 13"><rect x="0.5" y="0.5" width="12" height="12" rx="1.5" fill="#f3f3f3" stroke="#8e8e8e"/>
<path d="M2.8 6.6 L5.4 9.4 L10.2 3" fill="none" stroke="#222" stroke-width="2"/></svg>
<span class="t" style="left:637.0px;top:622.8px;font-size:10px;line-height:11.64px;color:#222;font-family:'DejaVu Sans','Liberation Sans',sans-serif;">Show Capacity Line</span>
<svg class="b" style="left:1140px;top:620px;" width="18" height="18" viewBox="0 0 18 18"><circle cx="7" cy="7" r="5.4" fill="none" stroke="#222" stroke-width="1.3"/>
<path d="M4.4 7 L9.6 7 M7 4.4 L7 9.6" stroke="#222" stroke-width="1.1"/>
<path d="M11 11 L16.6 16.6" stroke="#222" stroke-width="1.8"/></svg>
<div class="b" style="left:1164px;top:616px;width:1px;height:24px;background:#d0d0d0;"></div>
<span class="t" style="left:1176.0px;top:622.5px;font-size:14px;line-height:15.64px;color:#3f7cd8;font-weight:700;transform:scaleX(0.948);">Export</span>
<div class="b" style="left:41px;top:643px;width:1190px;height:1px;background:#dcdcdc;"></div>
<svg class="b" style="left:0;top:0;" width="1270" height="834" viewBox="0 0 1270 834"><line x1="120" y1="743.3" x2="1181" y2="743.3" stroke="#f9f9f9" stroke-width="1"/><line x1="120" y1="724.3499999999999" x2="1181" y2="724.3499999999999" stroke="#f9f9f9" stroke-width="1"/><line x1="120" y1="705.4" x2="1181" y2="705.4" stroke="#f9f9f9" stroke-width="1"/><line x1="120" y1="686.4499999999999" x2="1181" y2="686.4499999999999" stroke="#f9f9f9" stroke-width="1"/><line x1="120" y1="667.5" x2="1181" y2="667.5" stroke="#f9f9f9" stroke-width="1"/><line x1="127.95" y1="654" x2="127.95" y2="743.3" stroke="#f5f5f5" stroke-width="1"/><line x1="208.51999999999998" y1="654" x2="208.51999999999998" y2="743.3" stroke="#f5f5f5" stroke-width="1"/><line x1="289.09" y1="654" x2="289.09" y2="743.3" stroke="#f5f5f5" stroke-width="1"/><line x1="369.65999999999997" y1="654" x2="369.65999999999997" y2="743.3" stroke="#f5f5f5" stroke-width="1"/><line x1="450.22999999999996" y1="654" x2="450.22999999999996" y2="743.3" stroke="#f5f5f5" stroke-width="1"/><line x1="530.8" y1="654" x2="530.8" y2="743.3" stroke="#f5f5f5" stroke-width="1"/><line x1="611.37" y1="654" x2="611.37" y2="743.3" stroke="#f5f5f5" stroke-width="1"/><line x1="691.94" y1="654" x2="691.94" y2="743.3" stroke="#f5f5f5" stroke-width="1"/><line x1="772.51" y1="654" x2="772.51" y2="743.3" stroke="#f5f5f5" stroke-width="1"/><line x1="853.0799999999999" y1="654" x2="853.0799999999999" y2="743.3" stroke="#f5f5f5" stroke-width="1"/><line x1="933.65" y1="654" x2="933.65" y2="743.3" stroke="#f5f5f5" stroke-width="1"/><line x1="1014.22" y1="654" x2="1014.22" y2="743.3" stroke="#f5f5f5" stroke-width="1"/><line x1="1094.79" y1="654" x2="1094.79" y2="743.3" stroke="#f5f5f5" stroke-width="1"/><line x1="1175.36" y1="654" x2="1175.36" y2="743.3" stroke="#f5f5f5" stroke-width="1"/><polygon points="190.45,700.41 200.14999999999998,690.31 200.14999999999998,732.8 190.45,742.9" fill="#e9cb1c" stroke="#e9cb1c" stroke-width="0.5"/><rect x="127.95" y="700.41" width="62.5" height="42.49000000000001" fill="#f7e15c" stroke="#f7e15c" stroke-width="0.5"/><polygon points="190.45,682.1999999999999 200.14999999999998,672.0999999999999 200.14999999999998,690.31 190.45,700.41" fill="#56d54c" stroke="#56d54c" stroke-width="0.5"/><rect x="127.95" y="682.1999999999999" width="62.5" height="18.210000000000036" fill="#68e856" stroke="#68e856" stroke-width="0.5"/><polygon points="127.95,682.1999999999999 137.65,672.0999999999999 200.14999999999998,672.0999999999999 190.45,682.1999999999999" fill="#58d949" stroke="#58d949" stroke-width="0.5"/><polygon points="271.02,704.53153 280.71999999999997,694.43153 280.71999999999997,732.8 271.02,742.9" fill="#e9cb1c" stroke="#e9cb1c" stroke-width="0.5"/><rect x="208.51999999999998" y="704.53153" width="62.5" height="38.36847" fill="#f7e15c" stroke="#f7e15c" stroke-width="0.5"/><polygon points="271.02,682.1999999999999 280.71999999999997,672.0999999999999 280.71999999999997,694.43153 271.02,704.53153" fill="#56d54c" stroke="#56d54c" stroke-width="0.5"/><rect x="208.51999999999998" y="682.1999999999999" width="62.5" height="22.331530000000043" fill="#68e856" stroke="#68e856" stroke-width="0.5"/><polygon points="208.51999999999998,682.1999999999999 218.21999999999997,672.0999999999999 280.71999999999997,672.0999999999999 271.02,682.1999999999999" fill="#58d949" stroke="#58d949" stroke-width="0.5"/><polygon points="351.59,710.68651 361.28999999999996,700.58651 361.28999999999996,732.8 351.59,742.9" fill="#e9cb1c" stroke="#e9cb1c" stroke-width="0.5"/><rect x="289.09" y="710.68651" width="62.5" height="32.21348999999998" fill="#f7e15c" stroke="#f7e15c" stroke-width="0.5"/><polygon points="351.59,682.1999999999999 361.28999999999996,672.0999999999999 361.28999999999996,700.58651 351.59,710.68651" fill="#56d54c" stroke="#56d54c" stroke-width="0.5"/><rect x="289.09" y="682.1999999999999" width="62.5" height="28.486510000000067" fill="#68e856" stroke="#68e856" stroke-width="0.5"/><polygon points="289.09,682.1999999999999 298.78999999999996,672.0999999999999 361.28999999999996,672.0999999999999 351.59,682.1999999999999" fill="#58d949" stroke="#58d949" stroke-width="0.5"/><polygon points="432.15999999999997,706.74101 441.85999999999996,696.6410099999999 441.85999999999996,732.8 432.15999999999997,742.9" fill="#e9cb1c" stroke="#e9cb1c" stroke-width="0.5"/><rect x="369.65999999999997" y="706.74101" width="62.5" height="36.15899000000002" fill="#f7e15c" stroke="#f7e15c" stroke-width="0.5"/><polygon points="432.15999999999997,682.1999999999999 441.85999999999996,672.0999999999999 441.85999999999996,696.6410099999999 432.15999999999997,706.74101" fill="#56d54c" stroke="#56d54c" stroke-width="0.5"/><rect x="369.65999999999997" y="682.1999999999999" width="62.5" height="24.54101000000003" fill="#68e856" stroke="#68e856" stroke-width="0.5"/><polygon points="369.65999999999997,682.1999999999999 379.35999999999996,672.0999999999999 441.85999999999996,672.0999999999999 432.15999999999997,682.1999999999999" fill="#58d949" stroke="#58d949" stroke-width="0.5"/><polygon points="512.73,690.4369899999999 522.4300000000001,680.3369899999999 522.4300000000001,732.8 512.73,742.9" fill="#e9cb1c" stroke="#e9cb1c" stroke-width="0.5"/><rect x="450.22999999999996" y="690.4369899999999" width="62.5" height="52.463010000000054" fill="#f7e15c" stroke="#f7e15c" stroke-width="0.5"/><polygon points="512.73,682.1999999999999 522.4300000000001,672.0999999999999 522.4300000000001,680.3369899999999 512.73,690.4369899999999" fill="#56d54c" stroke="#56d54c" stroke-width="0.5"/><rect x="450.22999999999996" y="682.1999999999999" width="62.5" height="8.236989999999992" fill="#68e856" stroke="#68e856" stroke-width="0.5"/><polygon points="450.22999999999996,682.1999999999999 459.92999999999995,672.0999999999999 522.4300000000001,672.0999999999999 512.73,682.1999999999999" fill="#58d949" stroke="#58d949" stroke-width="0.5"/><polygon points="593.3,692.17301 603.0,682.07301 603.0,732.8 593.3,742.9" fill="#e9cb1c" stroke="#e9cb1c" stroke-width="0.5"/><rect x="530.8" y="692.17301" width="62.5" height="50.72699" fill="#f7e15c" stroke="#f7e15c" stroke-width="0.5"/><polygon points="593.3,682.1999999999999 603.0,672.0999999999999 603.0,682.07301 593.3,692.17301" fill="#56d54c" stroke="#56d54c" stroke-width="0.5"/><rect x="530.8" y="682.1999999999999" width="62.5" height="9.973010000000045" fill="#68e856" stroke="#68e856" stroke-width="0.5"/><polygon points="530.8,682.1999999999999 540.5,672.0999999999999 603.0,672.0999999999999 593.3,682.1999999999999" fill="#58d949" stroke="#58d949" stroke-width="0.5"/><polygon points="673.87,703.0140299999999 683.57,692.9140299999999 683.57,732.8 673.87,742.9" fill="#e9cb1c" stroke="#e9cb1c" stroke-width="0.5"/><rect x="611.37" y="703.0140299999999" width="62.5" height="39.88597000000004" fill="#f7e15c" stroke="#f7e15c" stroke-width="0.5"/><polygon points="673.87,682.1999999999999 683.57,672.0999999999999 683.57,692.9140299999999 673.87,703.0140299999999" fill="#56d54c" stroke="#56d54c" stroke-width="0.5"/><rect x="611.37" y="682.1999999999999" width="62.5" height="20.814030000000002" fill="#68e856" stroke="#68e856" stroke-width="0.5"/><polygon points="611.37,682.1999999999999 621.07,672.0999999999999 683.57,672.0999999999999 673.87,682.1999999999999" fill="#58d949" stroke="#58d949" stroke-width="0.5"/><polygon points="754.44,717.75199 764.1400000000001,707.65199 764.1400000000001,732.8 754.44,742.9" fill="#e9cb1c" stroke="#e9cb1c" stroke-width="0.5"/><rect x="691.94" y="717.75199" width="62.5" height="25.14801" fill="#f7e15c" stroke="#f7e15c" stroke-width="0.5"/><polygon points="754.44,682.1999999999999 764.1400000000001,672.0999999999999 764.1400000000001,707.65199 754.44,717.75199" fill="#56d54c" stroke="#56d54c" stroke-width="0.5"/><rect x="691.94" y="682.1999999999999" width="62.5" height="35.551990000000046" fill="#68e856" stroke="#68e856" stroke-width="0.5"/><polygon points="691.94,682.1999999999999 701.6400000000001,672.0999999999999 764.1400000000001,672.0999999999999 754.44,682.1999999999999" fill="#58d949" stroke="#58d949" stroke-width="0.5"/><polygon points="835.01,727.29403 844.71,717.19403 844.71,732.8 835.01,742.9" fill="#e9cb1c" stroke="#e9cb1c" stroke-width="0.5"/><rect x="772.51" y="727.29403" width="62.5" height="15.605969999999957" fill="#f7e15c" stroke="#f7e15c" stroke-width="0.5"/><polygon points="835.01,682.1999999999999 844.71,672.0999999999999 844.71,717.19403 835.01,727.29403" fill="#56d54c" stroke="#56d54c" stroke-width="0.5"/><rect x="772.51" y="682.1999999999999" width="62.5" height="45.09403000000009" fill="#68e856" stroke="#68e856" stroke-width="0.5"/><polygon points="772.51,682.1999999999999 782.21,672.0999999999999 844.71,672.0999999999999 835.01,682.1999999999999" fill="#58d949" stroke="#58d949" stroke-width="0.5"/><polygon points="915.5799999999999,735.96199 925.28,725.86199 925.28,732.8 915.5799999999999,742.9" fill="#e9cb1c" stroke="#e9cb1c" stroke-width="0.5"/><rect x="853.0799999999999" y="735.96199" width="62.5" height="6.938009999999963" fill="#f7e15c" stroke="#f7e15c" stroke-width="0.5"/><polygon points="915.5799999999999,682.1999999999999 925.28,672.0999999999999 925.28,725.86199 915.5799999999999,735.96199" fill="#56d54c" stroke="#56d54c" stroke-width="0.5"/><rect x="853.0799999999999" y="682.1999999999999" width="62.5" height="53.76199000000008" fill="#68e856" stroke="#68e856" stroke-width="0.5"/><polygon points="853.0799999999999,682.1999999999999 862.78,672.0999999999999 925.28,672.0999999999999 915.5799999999999,682.1999999999999" fill="#58d949" stroke="#58d949" stroke-width="0.5"/><polygon points="996.15,682.1999999999999 1005.85,672.0999999999999 1005.85,732.8 996.15,742.9" fill="#56d54c" stroke="#56d54c" stroke-width="0.5"/><rect x="933.65" y="682.1999999999999" width="62.5" height="60.700000000000045" fill="#68e856" stroke="#68e856" stroke-width="0.5"/><polygon points="933.65,682.1999999999999 943.35,672.0999999999999 1005.85,672.0999999999999 996.15,682.1999999999999" fill="#58d949" stroke="#58d949" stroke-width="0.5"/><polygon points="1076.72,682.1999999999999 1086.42,672.0999999999999 1086.42,732.8 1076.72,742.9" fill="#56d54c" stroke="#56d54c" stroke-width="0.5"/><rect x="1014.22" y="682.1999999999999" width="62.5" height="60.700000000000045" fill="#68e856" stroke="#68e856" stroke-width="0.5"/><polygon points="1014.22,682.1999999999999 1023.9200000000001,672.0999999999999 1086.42,672.0999999999999 1076.72,682.1999999999999" fill="#58d949" stroke="#58d949" stroke-width="0.5"/><polygon points="1157.29,682.1999999999999 1166.99,672.0999999999999 1166.99,732.8 1157.29,742.9" fill="#56d54c" stroke="#56d54c" stroke-width="0.5"/><rect x="1094.79" y="682.1999999999999" width="62.5" height="60.700000000000045" fill="#68e856" stroke="#68e856" stroke-width="0.5"/><polygon points="1094.79,682.1999999999999 1104.49,672.0999999999999 1166.99,672.0999999999999 1157.29,682.1999999999999" fill="#58d949" stroke="#58d949" stroke-width="0.5"/><line x1="168.235" y1="680.5" x2="1135.0749999999998" y2="680.5" stroke="#c4424e" stroke-width="1.7" stroke-dasharray="5,4.4" opacity="0.9"/><circle cx="168.235" cy="680.5" r="3.2" fill="#e8174a"/><circle cx="248.805" cy="680.5" r="3.2" fill="#e8174a"/><circle cx="329.375" cy="680.5" r="3.2" fill="#e8174a"/><circle cx="409.945" cy="680.5" r="3.2" fill="#e8174a"/><circle cx="490.51499999999993" cy="680.5" r="3.2" fill="#e8174a"/><circle cx="571.085" cy="680.5" r="3.2" fill="#e8174a"/><circle cx="651.655" cy="680.5" r="3.2" fill="#e8174a"/><circle cx="732.225" cy="680.5" r="3.2" fill="#e8174a"/><circle cx="812.795" cy="680.5" r="3.2" fill="#e8174a"/><circle cx="893.365" cy="680.5" r="3.2" fill="#e8174a"/><circle cx="973.935" cy="680.5" r="3.2" fill="#e8174a"/><circle cx="1054.5049999999999" cy="680.5" r="3.2" fill="#e8174a"/><circle cx="1135.0749999999998" cy="680.5" r="3.2" fill="#e8174a"/></svg>
<span class="t" style="left:101.1px;top:737.8px;font-size:11px;line-height:12.29px;color:#222;transform:scaleX(1.040);">0</span>
<span class="t" style="left:78.7px;top:718.9px;font-size:11px;line-height:12.29px;color:#222;transform:scaleX(1.040);">31.25</span>
<span class="t" style="left:85.1px;top:699.9px;font-size:11px;line-height:12.29px;color:#222;transform:scaleX(1.040);">62.5</span>
<span class="t" style="left:78.7px;top:681.0px;font-size:11px;line-height:12.29px;color:#222;transform:scaleX(1.040);">93.75</span>
<span class="t" style="left:88.3px;top:662.0px;font-size:11px;line-height:12.29px;color:#222;transform:scaleX(1.040);">125</span>
<span class="t" style="left:44px;top:684px;width:20px;height:20px;line-height:20px;text-align:center;font-size:11px;color:#222;transform:rotate(-90deg);transform-origin:50% 50%;">%</span>
<span class="t" style="left:151.0px;top:667.0px;font-size:11px;line-height:12.29px;color:#151515;transform:scaleX(1.040);-webkit-text-stroke:0.25px currentColor;">100.00</span>
<span class="t" style="left:148.1px;top:684.9px;font-size:11px;line-height:12.29px;color:#151515;transform:scaleX(1.040);-webkit-text-stroke:0.25px currentColor;">30.00</span>
<span class="t" style="left:148.1px;top:715.2px;font-size:11px;line-height:12.29px;color:#151515;transform:scaleX(1.040);-webkit-text-stroke:0.25px currentColor;">70.00</span>
<span class="t" style="left:143.1px;top:744.9px;font-size:11px;line-height:12.29px;color:#222;transform:scaleX(1.040);">Dec 02 19</span>
<span class="t" style="left:231.6px;top:667.0px;font-size:11px;line-height:12.29px;color:#151515;transform:scaleX(1.040);-webkit-text-stroke:0.25px currentColor;">100.00</span>
<span class="t" style="left:228.7px;top:687.0px;font-size:11px;line-height:12.29px;color:#151515;transform:scaleX(1.040);-webkit-text-stroke:0.25px currentColor;">36.79</span>
<span class="t" style="left:228.7px;top:717.3px;font-size:11px;line-height:12.29px;color:#151515;transform:scaleX(1.040);-webkit-text-stroke:0.25px currentColor;">63.21</span>
<span class="t" style="left:223.6px;top:744.9px;font-size:11px;line-height:12.29px;color:#222;transform:scaleX(1.040);">Dec 09 19</span>
<span class="t" style="left:312.2px;top:667.0px;font-size:11px;line-height:12.29px;color:#151515;transform:scaleX(1.040);-webkit-text-stroke:0.25px currentColor;">100.00</span>
<span class="t" style="left:309.3px;top:690.1px;font-size:11px;line-height:12.29px;color:#151515;transform:scaleX(1.040);-webkit-text-stroke:0.25px currentColor;">46.93</span>
<span class="t" style="left:309.3px;top:720.3px;font-size:11px;line-height:12.29px;color:#151515;transform:scaleX(1.040);-webkit-text-stroke:0.25px currentColor;">53.07</span>
<span class="t" style="left:304.2px;top:744.9px;font-size:11px;line-height:12.29px;color:#222;transform:scaleX(1.040);">Dec 16 19</span>
<span class="t" style="left:392.7px;top:667.0px;font-size:11px;line-height:12.29px;color:#151515;transform:scaleX(1.040);-webkit-text-stroke:0.25px currentColor;">100.00</span>
<span class="t" style="left:389.8px;top:688.1px;font-size:11px;line-height:12.29px;color:#151515;transform:scaleX(1.040);-webkit-text-stroke:0.25px currentColor;">40.43</span>
<span class="t" style="left:389.8px;top:718.4px;font-size:11px;line-height:12.29px;color:#151515;transform:scaleX(1.040);-webkit-text-stroke:0.25px currentColor;">59.57</span>
<span class="t" style="left:384.8px;top:744.9px;font-size:11px;line-height:12.29px;color:#222;transform:scaleX(1.040);">Dec 23 19</span>
<span class="t" style="left:473.3px;top:667.0px;font-size:11px;line-height:12.29px;color:#151515;transform:scaleX(1.040);-webkit-text-stroke:0.25px currentColor;">100.00</span>
<span class="t" style="left:470.4px;top:710.2px;font-size:11px;line-height:12.29px;color:#151515;transform:scaleX(1.040);-webkit-text-stroke:0.25px currentColor;">86.43</span>
<span class="t" style="left:465.3px;top:744.9px;font-size:11px;line-height:12.29px;color:#222;transform:scaleX(1.040);">Dec 30 19</span>
<span class="t" style="left:553.9px;top:667.0px;font-size:11px;line-height:12.29px;color:#151515;transform:scaleX(1.040);-webkit-text-stroke:0.25px currentColor;">100.00</span>
<span class="t" style="left:551.0px;top:711.1px;font-size:11px;line-height:12.29px;color:#151515;transform:scaleX(1.040);-webkit-text-stroke:0.25px currentColor;">83.57</span>
<span class="t" style="left:546.8px;top:744.9px;font-size:11px;line-height:12.29px;color:#222;transform:scaleX(1.040);">Jan 06 20</span>
<span class="t" style="left:634.5px;top:667.0px;font-size:11px;line-height:12.29px;color:#151515;transform:scaleX(1.040);-webkit-text-stroke:0.25px currentColor;">100.00</span>
<span class="t" style="left:631.5px;top:686.3px;font-size:11px;line-height:12.29px;color:#151515;transform:scaleX(1.040);-webkit-text-stroke:0.25px currentColor;">34.29</span>
<span class="t" style="left:631.5px;top:716.5px;font-size:11px;line-height:12.29px;color:#151515;transform:scaleX(1.040);-webkit-text-stroke:0.25px currentColor;">65.71</span>
<span class="t" style="left:627.4px;top:744.9px;font-size:11px;line-height:12.29px;color:#222;transform:scaleX(1.040);">Jan 13 20</span>
<span class="t" style="left:715.0px;top:667.0px;font-size:11px;line-height:12.29px;color:#151515;transform:scaleX(1.040);-webkit-text-stroke:0.25px currentColor;">100.00</span>
<span class="t" style="left:712.1px;top:693.6px;font-size:11px;line-height:12.29px;color:#151515;transform:scaleX(1.040);-webkit-text-stroke:0.25px currentColor;">58.57</span>
<span class="t" style="left:712.1px;top:723.9px;font-size:11px;line-height:12.29px;color:#151515;transform:scaleX(1.040);-webkit-text-stroke:0.25px currentColor;">41.43</span>
<span class="t" style="left:708.0px;top:744.9px;font-size:11px;line-height:12.29px;color:#222;transform:scaleX(1.040);">Jan 20 20</span>
<span class="t" style="left:795.6px;top:667.0px;font-size:11px;line-height:12.29px;color:#151515;transform:scaleX(1.040);-webkit-text-stroke:0.25px currentColor;">100.00</span>
<span class="t" style="left:792.7px;top:698.4px;font-size:11px;line-height:12.29px;color:#151515;transform:scaleX(1.040);-webkit-text-stroke:0.25px currentColor;">74.29</span>
<span class="t" style="left:792.7px;top:728.6px;font-size:11px;line-height:12.29px;color:#151515;transform:scaleX(1.040);-webkit-text-stroke:0.25px currentColor;">25.71</span>
<span class="t" style="left:788.6px;top:744.9px;font-size:11px;line-height:12.29px;color:#222;transform:scaleX(1.040);">Jan 27 20</span>
<span class="t" style="left:876.2px;top:667.0px;font-size:11px;line-height:12.29px;color:#151515;transform:scaleX(1.040);-webkit-text-stroke:0.25px currentColor;">100.00</span>
<span class="t" style="left:873.3px;top:702.7px;font-size:11px;line-height:12.29px;color:#151515;transform:scaleX(1.040);-webkit-text-stroke:0.25px currentColor;">88.57</span>
<span class="t" style="left:868.5px;top:744.9px;font-size:11px;line-height:12.29px;color:#222;transform:scaleX(1.040);">Feb 03 20</span>
<span class="t" style="left:956.7px;top:667.0px;font-size:11px;line-height:12.29px;color:#151515;transform:scaleX(1.040);-webkit-text-stroke:0.25px currentColor;">100.00</span>
<span class="t" style="left:950.6px;top:706.2px;font-size:11px;line-height:12.29px;color:#151515;transform:scaleX(1.040);-webkit-text-stroke:0.25px currentColor;">100.00</span>
<span class="t" style="left:949.1px;top:744.9px;font-size:11px;line-height:12.29px;color:#222;transform:scaleX(1.040);">Feb 10 20</span>
<span class="t" style="left:1037.3px;top:667.0px;font-size:11px;line-height:12.29px;color:#151515;transform:scaleX(1.040);-webkit-text-stroke:0.25px currentColor;">100.00</span>
<span class="t" style="left:1031.2px;top:706.2px;font-size:11px;line-height:12.29px;color:#151515;transform:scaleX(1.040);-webkit-text-stroke:0.25px currentColor;">100.00</span>
<span class="t" style="left:1029.6px;top:744.9px;font-size:11px;line-height:12.29px;color:#222;transform:scaleX(1.040);">Feb 17 20</span>
<span class="t" style="left:1117.9px;top:667.0px;font-size:11px;line-height:12.29px;color:#151515;transform:scaleX(1.040);-webkit-text-stroke:0.25px currentColor;">100.00</span>
<span class="t" style="left:1111.8px;top:706.2px;font-size:11px;line-height:12.29px;color:#151515;transform:scaleX(1.040);-webkit-text-stroke:0.25px currentColor;">100.00</span>
<span class="t" style="left:1110.2px;top:744.9px;font-size:11px;line-height:12.29px;color:#222;transform:scaleX(1.040);">Feb 24 20</span>
<div class="b" style="left:496.5px;top:792px;width:277px;height:23.5px;background:#fff;border:2px solid #6c6c6c;"></div>
<div class="b" style="left:505.5px;top:799.5px;width:3.5px;height:1.6px;background:#f0386a;"></div>
<div class="b" style="left:512px;top:799.5px;width:3.5px;height:1.6px;background:#f0386a;"></div>
<div class="b" style="left:518.5px;top:799.5px;width:3.5px;height:1.6px;background:#f0386a;"></div>
<span class="t" style="left:530.0px;top:795.0px;font-size:11px;line-height:12.29px;color:#222;transform:scaleX(1.040);">Capacity</span>
<div class="b" style="left:591px;top:798px;width:21px;height:10px;background:#67e755;"></div>
<span class="t" style="left:616.5px;top:795.0px;font-size:11px;line-height:12.29px;color:#222;transform:scaleX(1.111);">Availability</span>
<div class="b" style="left:678px;top:798px;width:20px;height:10px;background:#f7e15c;"></div>
<span class="t" style="left:703.5px;top:795.0px;font-size:11px;line-height:12.29px;color:#222;transform:scaleX(1.058);">Demand</span>
</section>
</main>
</body></html>
